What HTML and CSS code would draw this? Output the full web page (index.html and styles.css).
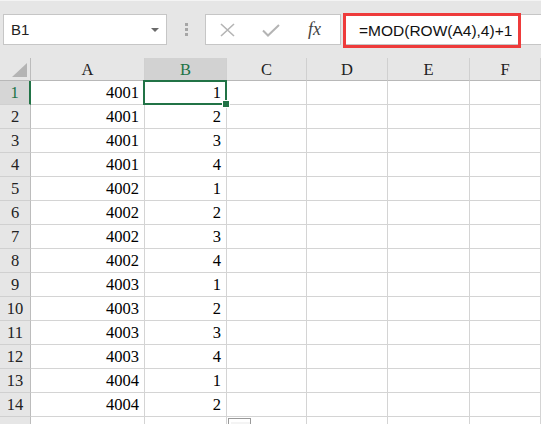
FILE: index.html
```html
<!DOCTYPE html>
<html>
<head>
<meta charset="utf-8">
<link rel="stylesheet" href="styles.css">
</head>
<body>
<div class="topbar">
  <div class="namebox"><span class="nm">B1</span><span class="arrow"></span></div>
  <div class="grip"><i></i><i></i><i></i></div>
  <div class="buttons">
    <svg class="ic" width="20" height="16" viewBox="0 0 20 16"><path d="M3 2 L16 14 M16 2 L3 14" stroke="#b4b4b4" stroke-width="1.6" fill="none"/></svg>
    <svg class="ic" width="20" height="16" viewBox="0 0 20 16"><path d="M2 8.5 L7 13.5 L18 3" stroke="#b4b4b4" stroke-width="2" fill="none"/></svg>
    <span class="fx">fx</span>
  </div>
  <div class="formula"><span class="hl">=MOD(ROW(A4),4)+1</span></div>
</div>
<div class="sheet">
  <div class="row head">
    <div class="c rh corner"><span class="tri"></span></div>
    <div class="c ca">A</div><div class="c cb sel">B</div><div class="c cc">C</div><div class="c cd">D</div><div class="c ce">E</div><div class="c cf">F</div>
  </div>
  <div class="row"><div class="c rh rsel">1</div><div class="c ca">4001</div><div class="c cb">1</div><div class="c cc"></div><div class="c cd"></div><div class="c ce"></div><div class="c cf"></div></div>
  <div class="row"><div class="c rh">2</div><div class="c ca">4001</div><div class="c cb">2</div><div class="c cc"></div><div class="c cd"></div><div class="c ce"></div><div class="c cf"></div></div>
  <div class="row"><div class="c rh">3</div><div class="c ca">4001</div><div class="c cb">3</div><div class="c cc"></div><div class="c cd"></div><div class="c ce"></div><div class="c cf"></div></div>
  <div class="row"><div class="c rh">4</div><div class="c ca">4001</div><div class="c cb">4</div><div class="c cc"></div><div class="c cd"></div><div class="c ce"></div><div class="c cf"></div></div>
  <div class="row"><div class="c rh">5</div><div class="c ca">4002</div><div class="c cb">1</div><div class="c cc"></div><div class="c cd"></div><div class="c ce"></div><div class="c cf"></div></div>
  <div class="row"><div class="c rh">6</div><div class="c ca">4002</div><div class="c cb">2</div><div class="c cc"></div><div class="c cd"></div><div class="c ce"></div><div class="c cf"></div></div>
  <div class="row"><div class="c rh">7</div><div class="c ca">4002</div><div class="c cb">3</div><div class="c cc"></div><div class="c cd"></div><div class="c ce"></div><div class="c cf"></div></div>
  <div class="row"><div class="c rh">8</div><div class="c ca">4002</div><div class="c cb">4</div><div class="c cc"></div><div class="c cd"></div><div class="c ce"></div><div class="c cf"></div></div>
  <div class="row"><div class="c rh">9</div><div class="c ca">4003</div><div class="c cb">1</div><div class="c cc"></div><div class="c cd"></div><div class="c ce"></div><div class="c cf"></div></div>
  <div class="row"><div class="c rh">10</div><div class="c ca">4003</div><div class="c cb">2</div><div class="c cc"></div><div class="c cd"></div><div class="c ce"></div><div class="c cf"></div></div>
  <div class="row"><div class="c rh">11</div><div class="c ca">4003</div><div class="c cb">3</div><div class="c cc"></div><div class="c cd"></div><div class="c ce"></div><div class="c cf"></div></div>
  <div class="row"><div class="c rh">12</div><div class="c ca">4003</div><div class="c cb">4</div><div class="c cc"></div><div class="c cd"></div><div class="c ce"></div><div class="c cf"></div></div>
  <div class="row"><div class="c rh">13</div><div class="c ca">4004</div><div class="c cb">1</div><div class="c cc"></div><div class="c cd"></div><div class="c ce"></div><div class="c cf"></div></div>
  <div class="row"><div class="c rh">14</div><div class="c ca">4004</div><div class="c cb">2</div><div class="c cc"></div><div class="c cd"></div><div class="c ce"></div><div class="c cf"></div></div>
  <div class="row"><div class="c rh"></div><div class="c ca"></div><div class="c cb"></div><div class="c cc"></div><div class="c cd"></div><div class="c ce"></div><div class="c cf"></div></div>
  <div class="selbox"><span class="handle"></span></div>
  <div class="paste"></div>
</div>
</body>
</html>
```
FILE: styles.css
```css
html, body {
  margin: 0;
  padding: 0;
  width: 541px;
  height: 424px;
  overflow: hidden;
  background: #ffffff;
}
.topbar {
  height: 58px;
  box-sizing: border-box;
  background: #e6e6e6;
  border-top: 1px solid #f4f4f4;
  padding-top: 13px;
  display: flex;
  align-items: flex-start;
  font-family: "Liberation Sans", Arial, sans-serif;
}
.namebox {
  margin-left: 3px;
  width: 164px;
  height: 31px;
  box-sizing: border-box;
  background: #fff;
  border: 1px solid #c6c6c6;
  display: flex;
  align-items: center;
  justify-content: space-between;
  padding: 0 7px 0 7px;
}
.nm {
  font-size: 15px;
  color: #222;
}
.arrow {
  width: 0;
  height: 0;
  border-left: 4px solid transparent;
  border-right: 4px solid transparent;
  border-top: 4px solid #6a6a6a;
}
.grip {
  width: 38px;
  height: 31px;
  display: flex;
  flex-direction: column;
  align-items: center;
  justify-content: center;
  gap: 2px;
}
.grip i {
  display: block;
  width: 3px;
  height: 3px;
  background: #a6a6a6;
}
.buttons {
  width: 136px;
  height: 31px;
  box-sizing: border-box;
  background: #fff;
  border: 1px solid #c6c6c6;
  display: flex;
  align-items: center;
  padding-left: 12px;
  gap: 23px;
}
.ic {
  display: block;
}
.fx {
  font-family: "Liberation Serif", "Times New Roman", serif;
  font-style: italic;
  font-size: 18px;
  color: #444;
  margin-left: 4px;
}
.formula {
  margin-left: 2px;
  flex: 1;
  height: 31px;
  box-sizing: border-box;
  background: #fff;
  border: 1px solid #c6c6c6;
  border-right: none;
  position: relative;
}
.hl {
  position: absolute;
  left: -1px;
  top: -2px;
  width: 178px;
  height: 35px;
  box-sizing: border-box;
  border: 3px solid #ee3b3b;
  font-size: 15.5px;
  color: #111;
  padding-left: 13px;
  line-height: 29px;
  white-space: nowrap;
}
.sheet {
  position: relative;
  font-family: "Liberation Serif", "Times New Roman", serif;
  font-size: 16.5px;
  color: #000;
}
.row {
  display: flex;
  height: 24px;
}
.row.head {
  height: 23px;
}
.c {
  box-sizing: border-box;
  border-right: 1px solid #d4d4d4;
  border-bottom: 1px solid #d4d4d4;
  height: 100%;
  line-height: 23px;
  text-align: right;
  padding-right: 5px;
  white-space: nowrap;
  overflow: hidden;
}
.rh {
  width: 31px;
  background: #e6e6e6;
  border-right: 1px solid #bcbcbc;
  border-bottom: 1px solid #d0d0d0;
  text-align: center;
  padding: 0;
  color: #222;
}
.rsel {
  background: #d6d6d6;
  color: #217346;
  border-right: 2px solid #217346;
}
.ca { width: 114px; }
.cb { width: 82px; }
.cc { width: 80px; }
.cd { width: 81px; }
.ce { width: 82px; }
.cf { flex: 1; }
.head .c {
  background: #e6e6e6;
  text-align: center;
  padding: 0;
  border-right: 1px solid #d0d0d0;
  border-bottom: 1px solid #b8b8b8;
  line-height: 24px;
  color: #222;
}
.head .sel {
  background: #d2d2d2;
  color: #217346;
}
.head .corner {
  position: relative;
  border-right: 1px solid #bcbcbc;
}
.tri {
  position: absolute;
  right: 3px;
  bottom: 3px;
  width: 0;
  height: 0;
  border-left: 15px solid transparent;
  border-bottom: 14px solid #b4b4b4;
}
.selbox {
  position: absolute;
  left: 143px;
  top: 22px;
  width: 84px;
  height: 25px;
  box-sizing: border-box;
  border: 2px solid #217346;
}
.handle {
  position: absolute;
  right: -5px;
  bottom: -5px;
  width: 6px;
  height: 6px;
  background: #217346;
  border: 1px solid #fff;
}
.paste {
  position: absolute;
  left: 228px;
  top: 360px;
  width: 23px;
  height: 14px;
  box-sizing: border-box;
  border: 1px solid #9a9a9a;
  background: #f4f4f4;
  box-shadow: inset 2px 2px 0 #fff, inset 0 3px 0 #fff;
}
```
